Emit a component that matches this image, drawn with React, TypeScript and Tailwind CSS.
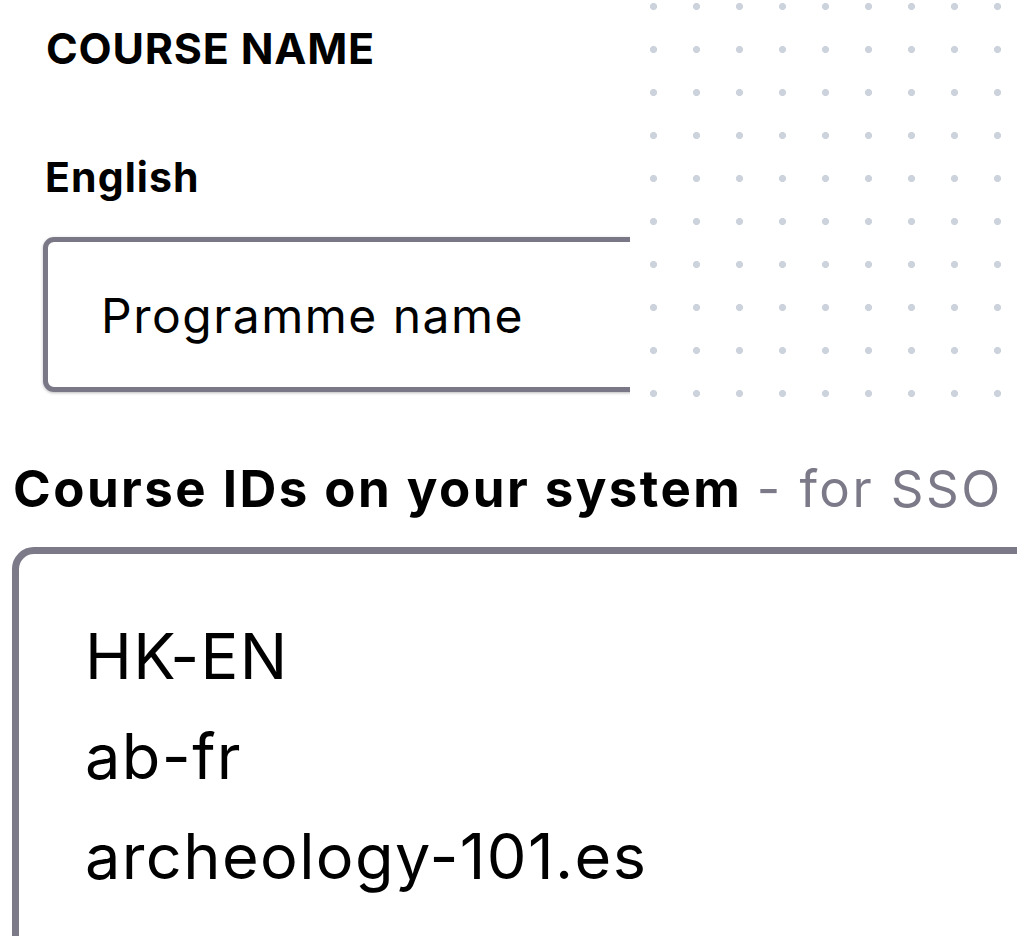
const courseIds = ["HK-EN", "ab-fr", "archeology-101.es"];

export default function App() {
  return (
    <div className="h-[936px] w-[1028px] overflow-hidden bg-white text-black [font-family:Inter,Lato,sans-serif]">
      <div className="flex h-[420px]">
        <div className="w-[630px] shrink-0 overflow-hidden pl-[43px] pt-[27px]">
          <h2 className="pl-[3px] text-[43px] font-bold leading-none tracking-[0.8px]">COURSE NAME</h2>
          <h3 className="mt-[87px] pl-[2px] text-[41px] font-bold leading-none tracking-[1.1px]">English</h3>
          <div className="mt-[39px] w-[720px] rounded-[11px] border-[5px] border-[#7a7887] bg-white pb-[47px] pl-[53px] pt-[50px] text-[48px] leading-none tracking-[1.5px] shadow-[0_1px_3px_rgba(60,58,70,0.35)]">
            Programme name
          </div>
        </div>
        <div className="flex-1 bg-[radial-gradient(circle,#cdd3dc_3.2px,transparent_3.9px)] bg-[length:43px_43px] bg-[position:2px_-15px]" />
      </div>

      <h2 className="ml-[13px] mt-[43px] whitespace-nowrap text-[51px] font-bold leading-none tracking-[2.45px]">
        Course IDs on your system <span className="font-normal text-[#7c7a88]">- for SSO</span>
      </h2>

      <div className="ml-[12px] mt-[33px] w-[1005px] overflow-hidden">
        <div className="h-[500px] w-[1100px] rounded-tl-[22px] border-[7px] border-[#7c7a88] pl-[66px] pt-[52px]">
          {courseIds.map((id) => (
            <div key={id} className="text-[63px] leading-[100px] tracking-[1.4px]">
              {id}
            </div>
          ))}
        </div>
      </div>
    </div>
  );
}
